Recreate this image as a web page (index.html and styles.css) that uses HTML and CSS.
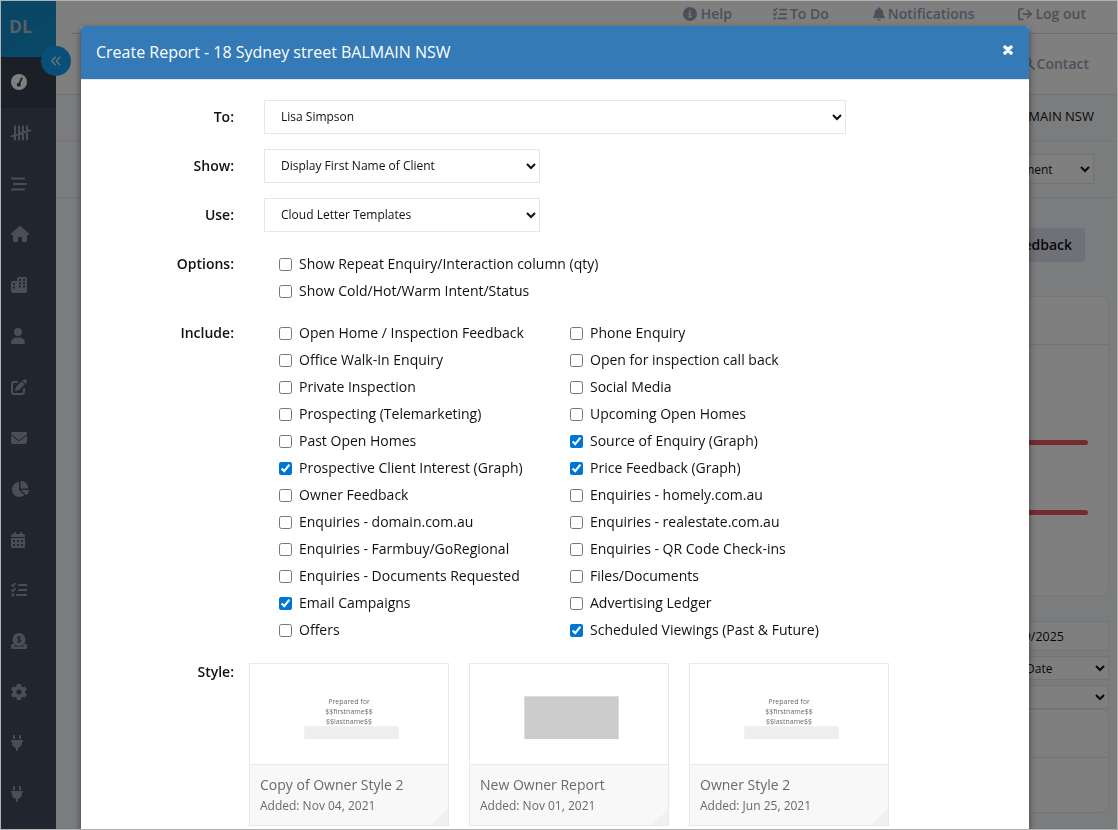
FILE: index.html
```html
<!DOCTYPE html>
<html lang="en">
<head>
<meta charset="utf-8">
<title>Create Report</title>
<link rel="stylesheet" href="styles.css">
</head>
<body>
<div class="app">
  <aside class="sidebar">
    <div class="logo">DL</div>
    <nav class="menu">
      <a class="item active"><svg width="16" height="16" viewBox="0 0 16 16"><circle cx="8" cy="8" r="8"/><path class="cut-line" d="M10.8 4.2 8.4 9.4"/><circle class="cut" cx="7.8" cy="10.8" r="2"/></svg></a>
      <a class="item"><svg width="20" height="16" viewBox="0 0 20 16"><path class="line" d="M4 1.5v13M8 1.5v13M12 1.5v13M16 1.5v13M.8 11.2 19.2 5.3"/></svg></a>
      <a class="item"><svg width="16" height="16" viewBox="0 0 16 16"><path class="line" d="M1 2.500h12M3 8h12M1 13.500h12"/></svg></a>
      <a class="item"><svg width="18" height="16" viewBox="0 0 576 512"><path d="M575.8 255.500c0 18-15 32.100-32 32.100h-32l.7 160.200c0 2.700-.2 5.400-.5 8.100V472c0 22.100-17.900 40-40 40H392c-22.100 0-40-17.900-40-40V384c0-17.700-14.300-32-32-32H256c-17.700 0-32 14.300-32 32v88c0 22.100-17.900 40-40 40H104c-22.100 0-40-17.900-40-40V287.600H32c-18 0-32-14-32-32.100c0-9 3-17 10-24L266.400 8c7-7 15-8 22-8s15 2 21 7L564.800 231.500c8 7 12 15 11 24z"/></svg></a>
      <a class="item"><svg width="16" height="16" viewBox="0 0 16 16"><path d="M6 2a2 2 0 0 1 2-2h6a2 2 0 0 1 2 2v12a2 2 0 0 1-2 2H2a2 2 0 0 1-2-2V6a2 2 0 0 1 2-2h4z"/><path class="cut" d="M2 6h2v2H2zM2 9.500h2v2H2zM8 2h2v2H8zM12 2h2v2h-2zM8 5.200h2v2H8zM12 5.200h2v2h-2zM8 8.500h2v2H8zM12 8.500h2v2h-2z"/></svg></a>
      <a class="item"><svg width="14" height="16" viewBox="0 0 448 512"><path d="M224 256A128 128 0 1 0 224 0a128 128 0 1 0 0 256zm-45.700 48C79.800 304 0 383.800 0 482.300C0 498.700 13.300 512 29.700 512H418.300c16.400 0 29.700-13.300 29.700-29.700C448 383.800 368.200 304 269.700 304H178.300z"/></svg></a>
      <a class="item"><svg width="16" height="16" viewBox="0 0 512 512"><path d="M471.600 21.700c-21.900-21.900-57.300-21.900-79.200 0L362.300 51.700l97.900 97.900 30.100-30.100c21.900-21.900 21.900-57.300 0-79.200L471.600 21.700zm-299.200 220c-6.100 6.100-10.800 13.600-13.500 21.900l-29.600 88.800c-2.900 8.600-.6 18.100 5.800 24.600s15.900 8.700 24.600 5.800l88.800-29.600c8.200-2.700 15.700-7.400 21.900-13.500L437.700 172.300 339.700 74.300 172.400 241.700zM96 64C43 64 0 107 0 160V416c0 53 43 96 96 96H352c53 0 96-43 96-96V320c0-17.700-14.300-32-32-32s-32 14.300-32 32v96c0 17.700-14.300 32-32 32H96c-17.700 0-32-14.300-32-32V160c0-17.700 14.300-32 32-32h96c17.700 0 32-14.300 32-32s-14.300-32-32-32H96z"/></svg></a>
      <a class="item"><svg width="16" height="16" viewBox="0 0 512 512"><path d="M48 64C21.500 64 0 85.500 0 112c0 15.100 7.100 29.300 19.200 38.400L236.800 313.600c11.400 8.500 27 8.500 38.400 0L492.800 150.400c12.100-9.100 19.200-23.300 19.200-38.400c0-26.500-21.500-48-48-48H48zM0 176V384c0 35.300 28.700 64 64 64H448c35.300 0 64-28.700 64-64V176L294.400 339.200c-22.800 17.100-54 17.100-76.800 0L0 176z"/></svg></a>
      <a class="item"><svg width="18" height="16" viewBox="0 0 576 512"><path d="M304 240V16.600c0-9 7-16.600 16-16.600C443.700 0 544 100.300 544 224c0 9-7.600 16-16.600 16H304zM32 272C32 150.700 122.100 50.300 239 34.300c9.200-1.300 17 6.100 17 15.400V288L412.500 444.500c6.700 6.700 6.200 17.700-1.500 23.100C371.800 495.600 323.800 512 272 512C139.500 512 32 404.600 32 272zm526.400 16c9.300 0 16.600 7.800 15.400 17c-7.700 55.900-34.600 105.600-73.900 142.300c-6 5.600-15.400 5.200-21.200-.7L320 288H558.400z"/></svg></a>
      <a class="item"><svg width="14" height="16" viewBox="0 0 14 16"><path d="M3 1a1 1 0 0 1 2 0v1h4V1a1 1 0 0 1 2 0v1h1.500A1.500 1.500 0 0 1 14 3.500V5H0V3.500A1.500 1.500 0 0 1 1.500 2H3zM0 6h14v8.500a1.500 1.500 0 0 1-1.500 1.500h-11A1.500 1.500 0 0 1 0 14.500z"/><path class="cut" d="M2 8h2v2H2zM6 8h2v2H6zM10 8h2v2h-2zM2 12h2v2H2zM6 12h2v2H6zM10 12h2v2h-2z"/></svg></a>
      <a class="item"><svg width="16" height="16" viewBox="0 0 16 16"><path class="line" d="M8 3h7.200M8 8h7.200M6 13h9.200"/><path class="tick" d="M.7 3 2 4.300 4.300 1.500M.7 8 2 9.300 4.300 6.500"/><circle cx="1.800" cy="13" r="1.400"/></svg></a>
      <a class="item"><svg width="16" height="16" viewBox="0 0 16 16"><circle cx="8" cy="6.500" r="6.500"/><path d="M1.500 11h2.100A6.600 6.600 0 0 0 5 12.500H2.800v1h10.400v-1H11A6.600 6.600 0 0 0 12.400 11h2.100A1.500 1.500 0 0 1 16 12.500v2a1.500 1.500 0 0 1-1.500 1.500h-13A1.500 1.500 0 0 1 0 14.500v-2A1.500 1.500 0 0 1 1.500 11z"/><path class="cut-thin" d="M9.800 4.500C8.900 3.800 6.300 3.500 6.300 5c0 1.700 3.500 1 3.500 2.800 0 1.500-2.500 1.500-3.700.6M8 2.700v7.400"/></svg></a>
      <a class="item"><svg width="16" height="16" viewBox="0 0 16 16"><g><rect x="5.700" y="0" width="4.600" height="16" rx="1.300"/><rect x="5.700" y="0" width="4.600" height="16" rx="1.300" transform="rotate(60 8 8)"/><rect x="5.700" y="0" width="4.600" height="16" rx="1.300" transform="rotate(120 8 8)"/><circle cx="8" cy="8" r="6"/></g><circle class="cut" cx="8" cy="8" r="2.600"/></svg></a>
      <a class="item"><svg width="12" height="16" viewBox="0 0 384 512"><path d="M96 0C78.300 0 64 14.300 64 32v96h64V32c0-17.700-14.300-32-32-32zM288 0c-17.700 0-32 14.300-32 32v96h64V32c0-17.700-14.300-32-32-32zM32 160c-17.700 0-32 14.300-32 32s14.300 32 32 32v32c0 77.400 55 142 128 156.800V480c0 17.700 14.300 32 32 32s32-14.300 32-32V412.800C297 398 352 333.400 352 256V224c17.700 0 32-14.300 32-32s-14.300-32-32-32H32z"/></svg></a>
      <a class="item"><svg width="12" height="16" viewBox="0 0 384 512"><path d="M96 0C78.300 0 64 14.300 64 32v96h64V32c0-17.700-14.300-32-32-32zM288 0c-17.700 0-32 14.300-32 32v96h64V32c0-17.700-14.300-32-32-32zM32 160c-17.700 0-32 14.300-32 32s14.300 32 32 32v32c0 77.400 55 142 128 156.800V480c0 17.700 14.300 32 32 32s32-14.300 32-32V412.800C297 398 352 333.400 352 256V224c17.700 0 32-14.300 32-32s-14.300-32-32-32H32z"/></svg></a>
    </nav>
    <span class="toggle"><svg width="10" height="10" viewBox="0 0 10 10"><path d="M4.700.7.800 5l3.900 4.300M9.200.7 5.300 5l3.900 4.300"/></svg></span>
  </aside>
  <main class="main">
    <div class="topbar">
      <a class="help"><svg width="14" height="14" viewBox="0 0 512 512"><path fill-rule="evenodd" d="M256 512A256 256 0 1 0 256 0a256 256 0 1 0 0 512zM216 336h24V272H216c-13.300 0-24-10.700-24-24s10.700-24 24-24h48c13.300 0 24 10.700 24 24v88h8c13.300 0 24 10.700 24 24s-10.700 24-24 24H216c-13.300 0-24-10.700-24-24s10.700-24 24-24zm40-208a32 32 0 1 1 0 64 32 32 0 1 1 0-64z"/></svg>Help</a>
      <a class="todo"><svg width="14" height="14" viewBox="0 0 16 16"><path class="line" d="M8 3h7.200M8 8h7.200M6 13h9.200"/><path class="tick" d="M.7 3 2 4.300 4.300 1.500M.7 8 2 9.300 4.300 6.500"/><circle cx="1.800" cy="13" r="1.400"/></svg>To Do</a>
      <a class="notes"><svg width="12" height="14" viewBox="0 0 448 512"><path d="M224 0c-17.700 0-32 14.300-32 32V51.200C119 66 64 130.600 64 208v18.800c0 47-17.300 92.400-48.500 127.600l-7.400 8.300c-8.400 9.400-10.400 22.900-5.300 34.400S19.400 416 32 416H416c12.600 0 24-7.400 29.200-18.900s3.100-25-5.300-34.400l-7.400-8.300C401.300 319.200 384 273.900 384 226.800V208c0-77.400-55-142-128-156.800V32c0-17.700-14.300-32-32-32zm45.300 493.300c12-12 18.700-28.300 18.700-45.300H160c0 17 6.700 33.300 18.700 45.300s28.300 18.700 45.300 18.700s33.300-6.700 45.300-18.700z"/></svg>Notifications</a>
      <a class="logout"><svg width="14" height="14" viewBox="0 0 16 16"><path class="line" d="M5.500 2H3a2 2 0 0 0-2 2v8a2 2 0 0 0 2 2h2.500M6 8h9M11 4l4 4-4 4"/></svg>Log out</a>
    </div>
    <div class="searchbar"><svg width="14" height="14" viewBox="0 0 16 16"><path class="line" d="M11 6.500a4.500 4.500 0 1 1-9 0 4.500 4.500 0 0 1 9 0zM10 10l5 5"/></svg>Contact</div>
    <div class="crumb">18 Sydney street BALMAIN NSW</div>
    <div class="filter"><select class="sel kind"><option>Appointment</option></select></div>
    <div class="content">
      <div class="tab">Feedback</div>
      <section class="card chart"><div class="card-head"></div><div class="bar"></div><div class="bar"></div></section>
      <div class="date">01/09/2025</div>
      <select class="sel small by-date"><option>Date</option></select>
      <select class="sel small"><option></option></select>
      <section class="card list"><div class="card-head"></div></section>
    </div>
  </main>
</div>

<div class="backdrop"></div>

<div class="modal">
  <header class="modal-head">
    <h1>Create Report - 18 Sydney street BALMAIN NSW</h1>
    <svg width="10" height="10" viewBox="0 0 10 10"><path d="M2 2l6 6M8 2 2 8"/></svg>
  </header>
  <form class="form">
    <div class="row"><b>To:</b><select class="sel wide"><option>Lisa Simpson</option></select></div>
    <div class="row"><b>Show:</b><select class="sel"><option>Display First Name of Client</option></select></div>
    <div class="row"><b>Use:</b><select class="sel"><option>Cloud Letter Templates</option></select></div>
    <div class="row checks-row"><b>Options:</b>
      <div class="checks single">
        <label><input type="checkbox">Show Repeat Enquiry/Interaction column (qty)</label>
        <label><input type="checkbox">Show Cold/Hot/Warm Intent/Status</label>
      </div>
    </div>
    <div class="row checks-row"><b>Include:</b>
      <div class="checks">
        <label><input type="checkbox">Open Home / Inspection Feedback</label>
        <label><input type="checkbox">Phone Enquiry</label>
        <label><input type="checkbox">Office Walk-In Enquiry</label>
        <label><input type="checkbox">Open for inspection call back</label>
        <label><input type="checkbox">Private Inspection</label>
        <label><input type="checkbox">Social Media</label>
        <label><input type="checkbox">Prospecting (Telemarketing)</label>
        <label><input type="checkbox">Upcoming Open Homes</label>
        <label><input type="checkbox">Past Open Homes</label>
        <label><input type="checkbox" checked>Source of Enquiry (Graph)</label>
        <label><input type="checkbox" checked>Prospective Client Interest (Graph)</label>
        <label><input type="checkbox" checked>Price Feedback (Graph)</label>
        <label><input type="checkbox">Owner Feedback</label>
        <label><input type="checkbox">Enquiries - homely.com.au</label>
        <label><input type="checkbox">Enquiries - domain.com.au</label>
        <label><input type="checkbox">Enquiries - realestate.com.au</label>
        <label><input type="checkbox">Enquiries - Farmbuy/GoRegional</label>
        <label><input type="checkbox">Enquiries - QR Code Check-ins</label>
        <label><input type="checkbox">Enquiries - Documents Requested</label>
        <label><input type="checkbox">Files/Documents</label>
        <label><input type="checkbox" checked>Email Campaigns</label>
        <label><input type="checkbox">Advertising Ledger</label>
        <label><input type="checkbox">Offers</label>
        <label><input type="checkbox" checked>Scheduled Viewings (Past &amp; Future)</label>
      </div>
    </div>
    <div class="row style-row"><b>Style:</b>
      <div class="styles">
        <article class="style">
          <div class="preview"><p>Prepared for<br>$$firstname$$<br>$$lastname$$</p><i class="strip"></i></div>
          <div class="info"><h2>Copy of Owner Style 2</h2><span>Added: Nov 04, 2021</span></div>
        </article>
        <article class="style">
          <div class="preview"><i class="block"></i></div>
          <div class="info"><h2>New Owner Report</h2><span>Added: Nov 01, 2021</span></div>
        </article>
        <article class="style">
          <div class="preview"><p>Prepared for<br>$$firstname$$<br>$$lastname$$</p><i class="strip"></i></div>
          <div class="info"><h2>Owner Style 2</h2><span>Added: Jun 25, 2021</span></div>
        </article>
      </div>
    </div>
  </form>
</div>
<div class="frame"></div>
</body>
</html>
```
FILE: styles.css
```css
* { box-sizing: border-box; }
html, body { height: 100%; margin: 0; overflow: hidden; }
body { font-family: "Open Sans", "Noto Sans", sans-serif; font-size: 14px; color: #111; background: #f4f6f8; }
svg { display: block; flex: none; }
h1, h2, p { margin: 0; font-weight: 400; }

/* page behind the dialog */
.app { display: flex; height: 830px; padding: 1px; }
.sidebar { position: relative; width: 55px; flex: none; background: #414b5f; }
.logo { height: 56px; padding: 0 0 7px 8px; display: flex; align-items: center; font-size: 17.5px; font-weight: 700; color: #b4bec6; background: linear-gradient(145deg, #128acb 55%, #1490cf 56%); }
.item { --bg: #414b5f; display: flex; align-items: center; height: 50.85px; padding: 0 0 1px 10px; fill: #969dac; stroke: none; }
.item.active { --bg: #363e4f; background: var(--bg); fill: #fff; }
.line { fill: none; stroke: #969dac; stroke-width: 2; stroke-linecap: round; stroke-linejoin: round; }
.tick { fill: none; stroke: #969dac; stroke-width: 1.6; stroke-linecap: round; }
.cut { fill: var(--bg); }
.cut-line { fill: none; stroke: var(--bg); stroke-width: 1.8; stroke-linecap: round; }
.cut-thin { fill: none; stroke: var(--bg); stroke-width: 1.1; }
.toggle { position: absolute; left: 40px; top: 45px; width: 30px; height: 30px; border-radius: 50%; background: #10a0f4; display: flex; align-items: center; justify-content: center; }
.toggle path { fill: none; stroke: #cfe6f5; stroke-width: 1.4; }

.main { flex: 1; min-width: 0; background: #f7f9fc; }
.topbar { display: flex; justify-content: flex-end; height: 33px; margin-left: 15px; padding: 0 31px 7px 0; border-bottom: 1px solid #d5d8dc; box-shadow: 0 0 0 15px #fff; clip-path: inset(0 0 0 -15px); background: #fff; }
.topbar a, .searchbar { display: flex; align-items: center; gap: 4px; font-weight: 600; color: #9ba1b4; fill: #9ba1b4; }
.topbar .line, .topbar .tick, .searchbar .line { stroke: #9ba1b4; }
.topbar .todo { margin-left: 41px; gap: 3px; }
.topbar .notes { margin-left: 44px; gap: 3px; }
.topbar .logout { margin-left: 44px; gap: 3px; }
.searchbar { justify-content: flex-end; gap: 2px; height: 61px; padding: 0 28px 2px 0; background: #fff; border-bottom: 1px solid #e2e6ea; }
.crumb { display: flex; justify-content: flex-end; align-items: center; height: 48px; padding: 0 23px 6px 0; font-size: 13px; border-bottom: 1px solid #fff; box-shadow: inset 0 -1px #e2e6ea; }
.filter { display: flex; justify-content: flex-end; align-items: flex-start; height: 55px; padding: 11px 23px 0 0; border-bottom: 1px solid #e2e6ea; }
.content { display: flex; flex-direction: column; align-items: flex-end; padding: 30px 8px 0 0; }
.tab { height: 34px; margin-right: 24px; padding: 0 13px; line-height: 33px; font-weight: 600; background: #e0e2f0; border-radius: 3px; }
.card { width: 440px; background: #fff; border: 1px solid #e6eaee; border-radius: 8px; }
.card-head { height: 48px; border-bottom: 1px solid #e2e6ea; }
.chart { height: 300px; margin-top: 34px; }
.bar { height: 5px; width: 400px; margin: 95px 0 0 18px; border-radius: 3px; background: #ed5565; }
.bar + .bar { margin-top: 65px; }
.date { width: 120px; height: 30px; margin-top: 25px; padding-right: 44px; line-height: 29px; font-size: 12.5px; text-align: right; border: 1px solid #e2e6ea; background: #fff; }

.sel { width: 276px; height: 34px; padding: 5px 12px 7px; font: 12px "Open Sans", sans-serif; color: #111; background: #fff; border: 1px solid #e5e6e7; border-radius: 0; }
.sel.wide { width: 582px; }
.sel.kind { width: 130px; height: 30px; padding: 0 0 0 10px; }
.sel.small { width: 114px; height: 24px; margin-top: 5px; padding: 0 0 0 26px; flex: none; }
.list { height: 104px; }

.backdrop { position: fixed; inset: 0; background: #000; opacity: .5; }

/* dialog */
.modal { position: absolute; left: 81px; top: 26px; width: 948px; height: 804px; background: #fff; border-radius: 4px 4px 0 0; box-shadow: 0 3px 7px rgba(0,0,0,.5); overflow: hidden; }
.modal-head { display: flex; align-items: center; justify-content: space-between; height: 54px; padding: 0 16px 2px 15px; color: #fff; background: #337ab7; border-bottom: 1px solid #e5e5e5; }
.modal-head h1 { font-size: 16px; }
.modal-head svg { margin-bottom: 4px; }
.modal-head path { stroke: #fff; stroke-width: 3.4; stroke-linecap: round; }
.form { display: flex; flex-direction: column; gap: 15px; padding-top: 20px; }
.row { display: grid; grid-template-columns: 153px 1fr; column-gap: 30px; }
.row > b { font-weight: 600; line-height: 34px; text-align: right; }
.checks { display: grid; grid-template-columns: 291px 291px; padding-left: 15px; }
.checks.single { grid-template-columns: 1fr; padding-top: 3px; }
.checks-row > b { line-height: 27px; }
.checks-row:has(.single) > b { padding-top: 3px; }
.checks label { display: flex; align-items: center; height: 27px; }
.checks input { width: 13px; height: 13px; margin: 1px 7px 0 0; accent-color: #0075d8; }
.style-row { column-gap: 15px; margin-top: 5px; }
.style-row > b { line-height: 17px; }
.styles { display: flex; gap: 20px; }
.style { width: 200px; height: 163px; border: 1px solid #e7eaec; color: #676a6c; }
.preview { display: flex; flex-direction: column; align-items: center; justify-content: flex-end; height: 101px; padding: 0 0 25px 4px; border-bottom: 1px solid #e7eaec; }
.preview p { width: 94px; margin: 0 0 -1px -4px; font-size: 7px; line-height: 10px; text-align: center; }
.strip { width: 95px; height: 13px; background: #eee; border: 1px solid #f3f3f3; border-bottom: 0; }
.block { width: 95px; height: 43px; background: #ccc; border: 1px solid #ddd; border-bottom: 0; }
.info { height: 60px; padding: 10px; background: linear-gradient(135deg, transparent 50%, #f0f0f0 50%) right bottom / 16px 16px no-repeat #f8f8f8; }
.info h2 { font-size: 14px; line-height: 20px; }
.info span { display: block; font-size: 12px; line-height: 22px; }

.frame { position: fixed; inset: 0; border: 1px solid #b1b3b3; pointer-events: none; }
```
